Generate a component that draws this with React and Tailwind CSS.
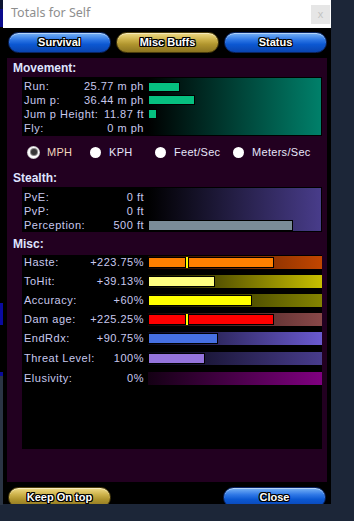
import React from "react";

const outline =
  "[text-shadow:1px_0_0_#000,-1px_0_0_#000,0_1px_0_#000,0_-1px_0_#000,1px_1px_0_#000,-1px_-1px_0_#000,1px_-1px_0_#000,-1px_1px_0_#000]";

function Btn({ children, gold, className }) {
  const skin = gold
    ? "bg-[linear-gradient(to_bottom,#f0dc88_0%,#cdb24a_35%,#b0952e_60%,#8c7420_100%)] border-[#4a3c0c]"
    : "bg-[linear-gradient(to_bottom,#7ab4f6_0%,#2f78e6_35%,#0c58d2_60%,#0a44b0_100%)] border-[#0a2460]";
  return (
    <div
      className={`h-[21px] w-[103px] rounded-full border flex items-center justify-center shadow-[inset_0_1px_0_rgba(255,255,255,0.45)] ${skin} ${className || ""}`}
    >
      <span
        className={`font-['Liberation_Sans',Arial,sans-serif] font-bold text-[11px] leading-none text-white ${outline}`}
      >
        {children}
      </span>
    </div>
  );
}

const labelCls =
  "font-['Liberation_Sans',Arial,sans-serif] text-[11px] tracking-[0.5px] text-[#c8c8ee] leading-none whitespace-nowrap";
const headCls =
  "font-['Liberation_Sans',Arial,sans-serif] font-bold text-[12px] text-[#dfe4ff] leading-none pl-[6px] flex items-center";

function Row({ h, label, value, children }) {
  return (
    <div className={`flex items-center ${h}`}>
      <div className="w-[121px] flex justify-between pl-[1px]">
        <span className={labelCls}>{label}</span>
        <span className={labelCls}>{value}</span>
      </div>
      <div className="ml-[4px] flex-1 flex items-center">{children}</div>
    </div>
  );
}

function Radio({ selected, label, w, color }) {
  return (
    <div className={`flex items-center ${w}`}>
      {selected ? (
        <div className="w-[11px] h-[11px] rounded-full bg-white flex items-center justify-center shadow-[0_0_0_1px_#d0d0d0]">
          <div className="w-[6px] h-[6px] rounded-full bg-[#383838] shadow-[0_0_0_1px_#8a8a8a]" />
        </div>
      ) : (
        <div className="w-[11px] h-[11px] rounded-full bg-white" />
      )}
      <span
        className={`ml-[8px] font-['Liberation_Sans',Arial,sans-serif] text-[11px] tracking-[0.3px] leading-none ${color}`}
      >
        {label}
      </span>
    </div>
  );
}

const misc = [
  { h: "h-[19px]", label: "Haste:", value: "+223.75%", track: "bg-[linear-gradient(to_right,#1a0800,#c24600)]", bar: "bg-[#ff8000]", w: 126, marker: true },
  { h: "h-[19px]", label: "ToHit:", value: "+39.13%", track: "bg-[linear-gradient(to_right,#0c0c00,#c8c000)]", bar: "bg-[#ffff80]", w: 67 },
  { h: "h-[19px]", label: "Accuracy:", value: "+60%", track: "bg-[linear-gradient(to_right,#080800,#848400)]", bar: "bg-[#ffff00]", w: 104 },
  { h: "h-[19px]", label: "Dam age:", value: "+225.25%", track: "bg-[linear-gradient(to_right,#100606,#884848)]", bar: "bg-[#ff0000]", w: 126, marker: true },
  { h: "h-[20px]", label: "EndRdx:", value: "+90.75%", track: "bg-[linear-gradient(to_right,#080818,#6a5ad0)]", bar: "bg-[#4670e2]", w: 70 },
  { h: "h-[20px]", label: "Threat Level:", value: "100%", track: "bg-[linear-gradient(to_right,#060612,#483c8c)]", bar: "bg-[#9474dc]", w: 57 },
  { h: "h-[20px]", label: "Elusivity:", value: "0%", track: "bg-[linear-gradient(to_right,#140014,#800080)]", bar: "", w: 0 },
];

export default function App() {
  return (
    <div className="w-[354px] h-[521px] bg-[#1c2638] flex items-start overflow-hidden">
      {/* strip of window behind */}
      <div className="w-[3px] h-[505px] flex flex-col">
        <div className="h-[9px] bg-[#0c1430]" />
        <div className="h-[18px] bg-[#0a0a8c]" />
        <div className="h-[276px] bg-black" />
        <div className="h-[22px] bg-[#0a0aa0]" />
        <div className="h-[47px] bg-black" />
        <div className="h-[4px] bg-[#0a0a9a]" />
        <div className="flex-1 bg-[#2a3444]" />
      </div>

      {/* window */}
      <div className="w-[328px] h-[504px] flex flex-col overflow-hidden bg-black">
        <div className="h-[28px] bg-white flex items-start shrink-0">
          <span className="ml-[8px] mt-[6px] font-['Noto_Sans',sans-serif] text-[12.5px] leading-[14px] text-[#8e8e8e]">
            Totals for Self
          </span>
          <div className="ml-auto mr-[1px] mt-[5px] w-[19px] h-[19px] bg-[#e6e6e6] flex items-center justify-center">
            <span className="font-['Liberation_Sans',Arial,sans-serif] text-[11px] leading-none text-[#c4c4c4]">x</span>
          </div>
        </div>

        <div className="flex-1 flex flex-col pt-[4px]">
          <div className="flex pl-[5px] gap-[5px]">
            <Btn>Survival</Btn>
            <Btn gold>Misc Buffs</Btn>
            <Btn>Status</Btn>
          </div>

          <div className="mt-[5px] ml-[4px] w-[320px] h-[424px] bg-[#220020] flex flex-col shrink-0">
            <div className={`${headCls} h-[19px]`}>Movement:</div>
            <div className="ml-[15px] w-[300px] h-[59px] border border-black bg-[linear-gradient(to_right,#000_125px,#00806a)] pt-[2px]">
              <Row h="h-[13px]" label="Run:" value="25.77 m ph">
                <div className="h-[10px] w-[32px] bg-[#06c080] border border-black" />
              </Row>
              <Row h="h-[14px]" label="Jum p:" value="36.44 m ph">
                <div className="h-[10px] w-[47px] bg-[#06c080] border border-black" />
              </Row>
              <Row h="h-[14px]" label="Jum p Height:" value="11.87 ft">
                <div className="h-[10px] w-[9px] bg-[#06c080] border border-black" />
              </Row>
              <Row h="h-[14px]" label="Fly:" value="0 m ph" />
            </div>

            <div className="h-[32px] flex items-center pl-[21px]">
              <Radio selected label="MPH" w="w-[62px]" color="text-[#f2d6bc]" />
              <Radio label="KPH" w="w-[65px]" color="text-[#e6e6fa]" />
              <Radio label="Feet/Sec" w="w-[78px]" color="text-[#e6e6fa]" />
              <Radio label="Meters/Sec" w="w-[80px]" color="text-[#e6e6fa]" />
            </div>

            <div className={`${headCls} h-[19px]`}>Stealth:</div>
            <div className="ml-[15px] w-[300px] h-[45px] border border-black bg-[linear-gradient(to_right,#000_125px,#483c8a)] pt-[2px]">
              <Row h="h-[14px]" label="PvE:" value="0 ft" />
              <Row h="h-[14px]" label="PvP:" value="0 ft" />
              <Row h="h-[14px]" label="Perception:" value="500 ft">
                <div className="h-[11px] w-[145px] bg-[#7a8c98] border border-black" />
              </Row>
            </div>

            <div className={`${headCls} h-[23px]`}>Misc:</div>
            <div className="ml-[15px] w-[300px] h-[194px] bg-black pt-[1px]">
              {misc.map((m) => (
                <div key={m.label} className={`flex items-start ${m.h}`}>
                  <div className="w-[122px] h-[13px] flex items-center justify-between pl-[2px]">
                    <span className={labelCls}>{m.label}</span>
                    <span className={labelCls}>{m.value}</span>
                  </div>
                  <div className={`ml-[4px] w-[174px] h-[13px] relative ${m.track}`}>
                    {m.w > 0 && (
                      <div
                        className={`absolute left-0 top-[1px] h-[11px] border border-black ${m.bar}`}
                        style={{ width: m.w }}
                      />
                    )}
                    {m.marker && (
                      <div className="absolute left-[37px] top-[1px] h-[11px] w-[4px] bg-[#ffff00] border-x border-black" />
                    )}
                  </div>
                </div>
              ))}
            </div>
          </div>

          <div className="mt-[5px] pl-[5px] flex">
            <Btn gold>Keep On top</Btn>
            <Btn className="ml-[112px]">Close</Btn>
          </div>
        </div>
      </div>
    </div>
  );
}
